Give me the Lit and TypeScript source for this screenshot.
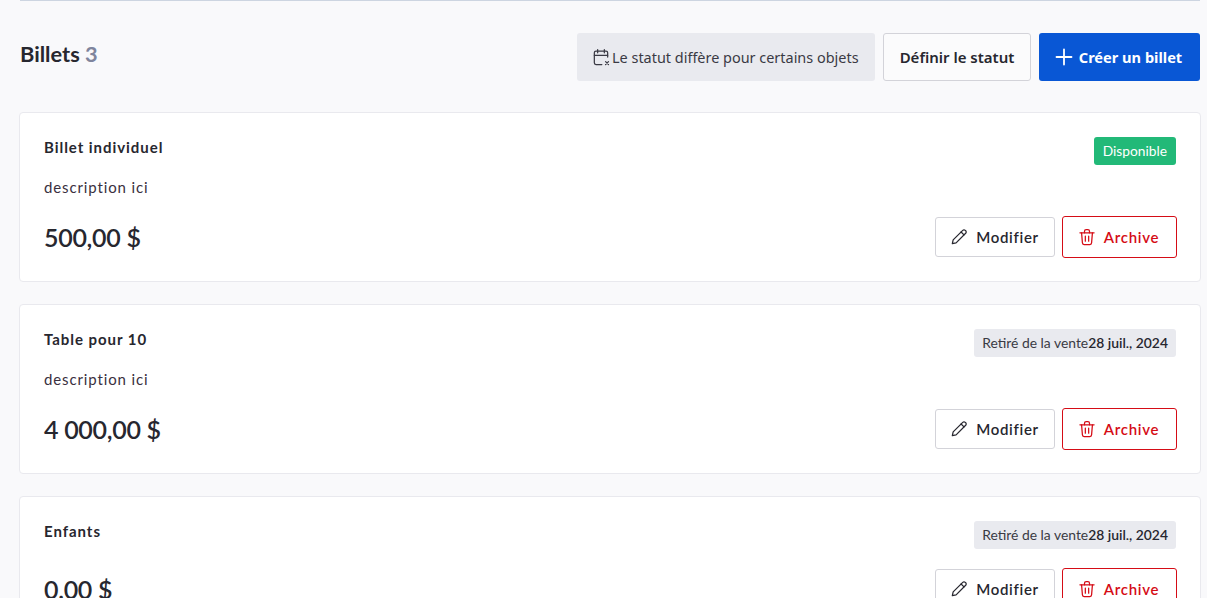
import { LitElement, html, css, svg, nothing } from "lit";
import { customElement } from "lit/decorators.js";

const tickets = [
  { name: "Billet individuel", desc: "description ici", price: "500,00 $", status: "Disponible" },
  { name: "Table pour 10", desc: "description ici", price: "4 000,00 $", status: "" },
  { name: "Enfants", desc: "", price: "0,00 $", status: "" },
];

const svgCal = svg`<path d="M20 12V7a2 2 0 0 0-2-2H6a2 2 0 0 0-2 2v12a2 2 0 0 0 2 2h7"/><path d="M4 10h16M8 3v4M16 3v4"/><path d="M17.5 17.5l3.5 3.5M21 17.5l-3.5 3.5"/>`;
const svgPen = svg`<path d="M4 20l1-4.5L16.5 4a2.1 2.1 0 0 1 3 0l.5.5a2.1 2.1 0 0 1 0 3L8.5 19z"/><path d="M14.5 6l3.5 3.5"/>`;
const svgTrash = svg`<path d="M3.5 7h17"/><path d="M5.5 7l1 12a2 2 0 0 0 2 2h7a2 2 0 0 0 2-2l1-12"/><path d="M9 7V5a2 2 0 0 1 2-2h2a2 2 0 0 1 2 2v2"/><path d="M10 11v6M14 11v6"/>`;

@customElement("app-root")
export class AppRoot extends LitElement {
  static styles = css`
    :host {
      display: block;
      height: 598px;
      overflow: hidden;
      background: #f9f9fb;
      font-family: Lato, sans-serif;
      color: #27272f;
    }
    .page { padding: 0 7px 0 20px; }
    .rule { height: 1px; background: #cdd5e1; }
    .head {
      display: flex;
      justify-content: space-between;
      align-items: flex-start;
      padding-top: 32px;
      margin-bottom: 31px;
    }
    h2 { margin: 7px 0 0; font-size: 21.8px; line-height: 27px; font-weight: 700; }
    h2 span { color: #7f859d; }
    .actions { display: flex; gap: 8px; }
    .btn {
      box-sizing: border-box;
      height: 48px;
      display: flex;
      align-items: center;
      border-radius: 3px;
      font-family: "Noto Sans", sans-serif;
    }
    .note { width: 298px; padding-left: 14px; background: #e9eaef; gap: 1px; color: #3a3a44; font-size: 14.45px; }
    .set { width: 148px; justify-content: center; background: #fbfbfc; border: 1px solid #d3d3d9; font-weight: 600; font-size: 15px; }
    .create { width: 161px; padding-right: 2px; justify-content: center; gap: 6px; background: #0957d5; color: #fff; font-weight: 700; font-size: 14.6px; }
    .cards { display: flex; flex-direction: column; gap: 22px; margin: 0 -1px; }
    .card {
      box-sizing: border-box;
      padding: 24px 24px 23px;
      background: #fff;
      border: 1px solid #e9e9ee;
      border-radius: 4px;
    }
    .top { display: flex; justify-content: space-between; align-items: flex-start; }
    .name { font-size: 15px; line-height: 20px; font-weight: 700; letter-spacing: 0.95px; }
    .badge {
      box-sizing: border-box;
      height: 28px;
      display: flex;
      align-items: center;
      border-radius: 3px;
      padding: 0 8px 2px;
      font-size: 13.9px;
    }
    .green { background: #22b978; color: #fff; padding: 0 9px 2px; font-size: 13.75px; }
    .gray { background: #e9eaef; color: #3a3a44; }
    .gray b { font-weight: 600; color: #27272f; }
    .desc { margin-top: 12px; font-size: 15px; line-height: 20px; letter-spacing: 0.87px; color: #3a3040; }
    .bottom { margin-top: 19px; display: flex; justify-content: space-between; align-items: center; }
    .price { font-size: 25px; line-height: 34px; font-weight: 600; letter-spacing: -0.3px; }
    .row { display: flex; gap: 7px; align-items: center; margin-right: -1px; }
    .act {
      box-sizing: border-box;
      display: flex;
      align-items: center;
      justify-content: center;
      gap: 7px;
      padding-right: 2px;
      background: #fff;
      border-radius: 3px;
      font-size: 15px;
      font-weight: 600;
      letter-spacing: 0.7px;
    }
    .edit { width: 120px; height: 40px; border: 1px solid #d3d3d9; }
    .del { width: 115px; height: 42px; padding-right: 3px; border: 1px solid #d50c16; color: #d50c16; }
    svg { display: block; flex: none; }
  `;

  private icon(paths: unknown, size = 20) {
    return html`<svg width=${size} height=${size} viewBox="0 0 24 24" fill="none" stroke="currentColor" stroke-width="1.5" stroke-linecap="round" stroke-linejoin="round">${paths}</svg>`;
  }

  render() {
    return html`
      <div class="page">
        <div class="rule"></div>
        <div class="head">
          <h2>Billets <span>3</span></h2>
          <div class="actions">
            <div class="btn note">
              ${this.icon(svgCal)}
              <span>Le statut diffère pour certains objets</span>
            </div>
            <div class="btn set">Définir le statut</div>
            <div class="btn create">
              <svg width="18" height="18" viewBox="0 0 18 18" fill="none" stroke="currentColor" stroke-width="1.8" stroke-linecap="round"><path d="M9 1.5v15M1.5 9h15"/></svg>
              Créer un billet
            </div>
          </div>
        </div>
        <div class="cards">
          ${tickets.map((t) => html`
            <div class="card">
              <div class="top">
                <div class="name">${t.name}</div>
                ${t.status
                  ? html`<div class="badge green">${t.status}</div>`
                  : html`<div class="badge gray">Retiré de la vente<b>28 juil., 2024</b></div>`}
              </div>
              ${t.desc ? html`<div class="desc">${t.desc}</div>` : nothing}
              <div class="bottom">
                <div class="price">${t.price}</div>
                <div class="row">
                  <div class="act edit">${this.icon(svgPen)}Modifier</div>
                  <div class="act del">${this.icon(svgTrash)}Archive</div>
                </div>
              </div>
            </div>
          `)}
        </div>
      </div>
    `;
  }
}
